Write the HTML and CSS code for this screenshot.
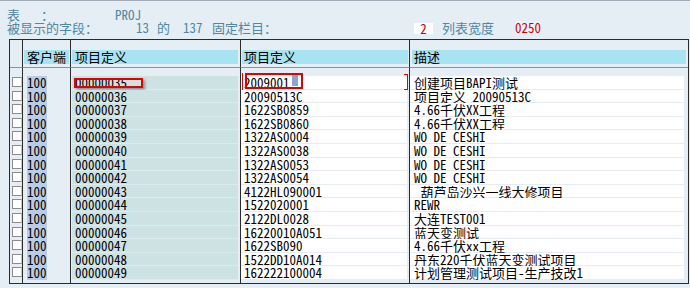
FILE: index.html
```html
<!DOCTYPE html>
<html lang="zh-CN">
<head>
    <meta charset="UTF-8">
    <title>PROJ 数据浏览</title>
    <link rel="stylesheet" href="styles.css">
</head>
<body>
    <div class="info">
        <div class="info-line">
            <span class="w-table">表</span><span class="w-colon">：</span><span>PROJ</span>
        </div>
        <div class="info-line">
            <span class="w-fields">被显示的字段：</span><span class="w-num">13</span><span class="w-of">的</span><span class="w-total">137</span><span class="w-fixed">固定栏目：</span><span class="fixed-box">2</span><span class="w-width">列表宽度</span><span class="list-width">0250</span>
        </div>
    </div>

    <table class="grid">
        <colgroup>
            <col class="c-sel">
            <col class="c-mandt">
            <col class="c-key">
            <col class="c-val">
            <col class="c-desc">
        </colgroup>
        <thead>
            <tr>
                <th></th>
                <th><div class="band">客户端</div></th>
                <th><div class="band band-key">项目定义</div></th>
                <th><div class="band band-val">项目定义</div></th>
                <th><div class="band band-desc">描述</div></th>
            </tr>
        </thead>
        <tbody>
            <tr class="gap"><td></td><td></td><td></td><td></td><td></td></tr>
            <tr>
                <td><span class="chk"></span></td>
                <td><span class="mandt">100</span></td>
                <td><div class="key">00000035<span class="mark mark-key"></span></div></td>
                <td><div class="val">2009001<span class="mark-line"></span><span class="mark mark-val"><span class="cursor"></span></span><span class="mark-end"></span></div></td>
                <td><div class="desc">创建项目BAPI测试</div></td>
            </tr>
            <tr>
                <td><span class="chk"></span></td>
                <td><span class="mandt">100</span></td>
                <td><div class="key">00000036</div></td>
                <td><div class="val">20090513C</div></td>
                <td><div class="desc">项目定义 20090513C</div></td>
            </tr>
            <tr>
                <td><span class="chk"></span></td>
                <td><span class="mandt">100</span></td>
                <td><div class="key">00000037</div></td>
                <td><div class="val">1622SB0859</div></td>
                <td><div class="desc">4.66千伏XX工程</div></td>
            </tr>
            <tr>
                <td><span class="chk"></span></td>
                <td><span class="mandt">100</span></td>
                <td><div class="key">00000038</div></td>
                <td><div class="val">1622SB0860</div></td>
                <td><div class="desc">4.66千伏XX工程</div></td>
            </tr>
            <tr>
                <td><span class="chk"></span></td>
                <td><span class="mandt">100</span></td>
                <td><div class="key">00000039</div></td>
                <td><div class="val">1322AS0004</div></td>
                <td><div class="desc">WO DE CESHI</div></td>
            </tr>
            <tr>
                <td><span class="chk"></span></td>
                <td><span class="mandt">100</span></td>
                <td><div class="key">00000040</div></td>
                <td><div class="val">1322AS0038</div></td>
                <td><div class="desc">WO DE CESHI</div></td>
            </tr>
            <tr>
                <td><span class="chk"></span></td>
                <td><span class="mandt">100</span></td>
                <td><div class="key">00000041</div></td>
                <td><div class="val">1322AS0053</div></td>
                <td><div class="desc">WO DE CESHI</div></td>
            </tr>
            <tr>
                <td><span class="chk"></span></td>
                <td><span class="mandt">100</span></td>
                <td><div class="key">00000042</div></td>
                <td><div class="val">1322AS0054</div></td>
                <td><div class="desc">WO DE CESHI</div></td>
            </tr>
            <tr>
                <td><span class="chk"></span></td>
                <td><span class="mandt">100</span></td>
                <td><div class="key">00000043</div></td>
                <td><div class="val">4122HL090001</div></td>
                <td><div class="desc"> 葫芦岛沙兴一线大修项目</div></td>
            </tr>
            <tr>
                <td><span class="chk"></span></td>
                <td><span class="mandt">100</span></td>
                <td><div class="key">00000044</div></td>
                <td><div class="val">1522020001</div></td>
                <td><div class="desc">REWR</div></td>
            </tr>
            <tr>
                <td><span class="chk"></span></td>
                <td><span class="mandt">100</span></td>
                <td><div class="key">00000045</div></td>
                <td><div class="val">2122DL0028</div></td>
                <td><div class="desc">大连TEST001</div></td>
            </tr>
            <tr>
                <td><span class="chk"></span></td>
                <td><span class="mandt">100</span></td>
                <td><div class="key">00000046</div></td>
                <td><div class="val">16220010A051</div></td>
                <td><div class="desc">蓝天变测试</div></td>
            </tr>
            <tr>
                <td><span class="chk"></span></td>
                <td><span class="mandt">100</span></td>
                <td><div class="key">00000047</div></td>
                <td><div class="val">1622SB090</div></td>
                <td><div class="desc">4.66千伏xx工程</div></td>
            </tr>
            <tr>
                <td><span class="chk"></span></td>
                <td><span class="mandt">100</span></td>
                <td><div class="key">00000048</div></td>
                <td><div class="val">1522DD10A014</div></td>
                <td><div class="desc">丹东220千伏蓝天变测试项目</div></td>
            </tr>
            <tr>
                <td><span class="chk"></span></td>
                <td><span class="mandt">100</span></td>
                <td><div class="key">00000049</div></td>
                <td><div class="val">162222100004</div></td>
                <td><div class="desc">计划管理测试项目-生产技改1</div></td>
            </tr>
            <tr class="gap-end"><td></td><td></td><td></td><td></td><td></td></tr>
        </tbody>
    </table>
</body>
</html>
```

FILE: styles.css
```css
body {
    margin: 0;
    background-color: #e5edf5;
    border-top: 1px solid #a4aebb;
    font-family: "Noto Sans Mono CJK SC", "Noto Sans CJK SC", monospace;
    font-size: 13px;
    color: #000;
}

/* header info above the list */
.info {
    padding: 7px 0 0 7px;
    color: #4f88a2;
    line-height: 13px;
}

.info-line {
    display: flex;
    height: 13px;
    white-space: pre;
}

.w-table { width: 34px; }
.w-colon { width: 74px; }
.w-fields { width: 129px; }
.w-num { width: 21px; }
.w-of { width: 26px; }
.w-total { width: 29px; }
.w-fixed { width: 202px; }
.w-width { width: 73px; }

.fixed-box {
    width: 19px;
    height: 11px;
    margin: 2px 9px 0 0;
    line-height: 11px;
    text-align: center;
    background-color: #fff;
    color: #d00000;
}

.list-width {
    color: #d00000;
    background-color: #eef2f7;
}

/* the list */
.grid {
    margin: 5px 0 0 9px;
    width: 680px;
    border: 1px solid #2b2b2b;
    border-spacing: 0;
    table-layout: fixed;
}

.c-sel { width: 12px; }
.c-mandt { width: 48px; }
.c-key { width: 170px; }
.c-val { width: 169px; }

.grid th,
.grid td {
    padding: 0;
    border-left: 1px solid #2b2b2b;
    vertical-align: top;
    text-align: left;
    font-weight: normal;
}

.grid th:first-child,
.grid td:first-child {
    border-left: none;
}

.grid th {
    padding: 10px 0 3px;
    border-bottom: 1px solid #8d939a;
}

.band {
    height: 14px;
    margin: 0 1px;
    padding-left: 3px;
    line-height: 14px;
    background-color: #a8e3f2;
}

.band-key { margin: 0 2px 0 1px; }
.band-val { margin: 0 1px 0 1px; padding-left: 2px; }
.band-desc { margin: 0 2px 0 2px; padding-left: 2px; }

.grid tbody td { height: 13.6px; line-height: 13px; }
.grid .gap td { height: 8px; line-height: 0; }
.grid .gap-end td { height: 3px; line-height: 0; }

.chk {
    display: block;
    width: 10px;
    height: 10px;
    box-sizing: border-box;
    margin: 1px 0 0 2px;
    background-color: #fff;
    border: 1px solid #8c8c8c;
    border-right-color: #c8c8c8;
}

.mandt {
    display: inline-block;
    height: 13.6px;
    margin-left: 4px;
    background-color: #b9cce6;
}

.key,
.val,
.desc {
    position: relative;
    height: 13.6px;
    box-sizing: border-box;
    white-space: pre;
}

.key {
    margin: 0 2px 0 1px;
    padding-left: 3px;
    background-color: #cde2e3;
    border-bottom: 1px solid #dcebeb;
}

.val {
    margin-right: 2px;
    padding-left: 3px;
    background-color: #fff;
    border-bottom: 1px solid #e6ecf2;
}

.desc {
    margin-right: 4px;
    padding-left: 4px;
    background-color: #fff;
    border-bottom: 1px solid #e6ecf2;
}

/* red markers drawn over the first row */
.mark {
    position: absolute;
    box-sizing: border-box;
    border: 2px solid #e30000;
}

.mark-key {
    left: 2px;
    top: 2px;
    width: 69px;
    height: 10px;
    box-shadow: 2px 2px 3px rgba(0, 0, 0, 0.35);
}

.mark-val {
    left: 4px;
    top: -3px;
    width: 58px;
    height: 16px;
}

.cursor {
    position: absolute;
    left: 45px;
    top: 0;
    width: 6px;
    height: 11px;
    background-color: #8ea6c8;
}

.mark-line {
    position: absolute;
    left: 1px;
    top: -3px;
    width: 1px;
    height: 19px;
    background-color: #e30000;
}

.mark-end {
    position: absolute;
    left: 163px;
    top: -2px;
    width: 4px;
    height: 16px;
    box-sizing: border-box;
    border: 1px solid #e30000;
    border-left: none;
}
```
